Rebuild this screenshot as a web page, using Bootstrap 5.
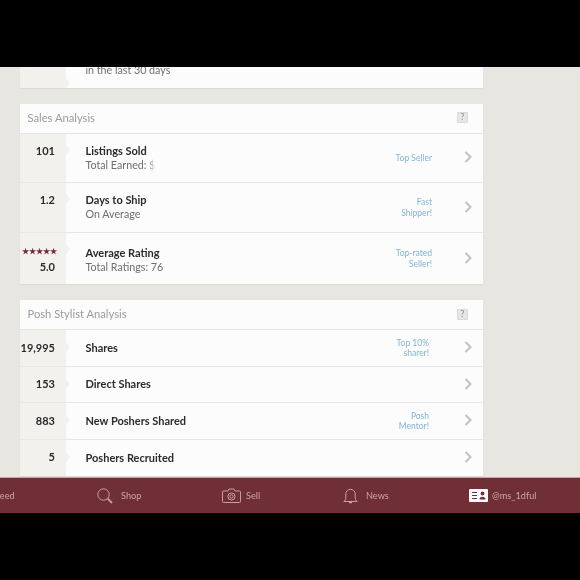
<!DOCTYPE html>
<html lang="en">
<head>
<meta charset="utf-8">
<title>Closet stats</title>
<link rel="stylesheet" href="https://cdn.jsdelivr.net/npm/bootstrap@5.3.0/dist/css/bootstrap.min.css">
<style>
html,body{height:580px;overflow:hidden;background:#000}
body{font-family:"Lato","Liberation Sans",sans-serif;color:#2b2a2c}
.letter-bar{height:67px;background:#000}
.stage{height:409.5px;overflow:hidden;background:#e8e6e1;padding:0 97px 0 19.5px;filter:blur(.35px)}
.panel{border:0;border-radius:0;background:#fdfcfd;box-shadow:0 1px 1px #dcdad5}
.panel+.panel{margin-top:16px}
.panel-head{height:30px;padding:0 15px 0 8px;font-size:11.2px;color:#9b9a9c;border-bottom:1.500px solid #e6e4e3}
.qmark{width:11px;height:11px;margin-top:-1px;background:#e8e6e3;border:1px solid #dcdad7;border-radius:1px;font-size:8.500px;line-height:9px;text-align:center;color:#8f8e8e}
.stat-row{border-bottom:1.500px solid #e9e7e6;position:relative}
.stat-row:last-child{border-bottom:0}
.rh48{height:49.5px}.rh52{height:51.5px}.rh36{height:36.5px}
.rh-first{height:20.5px}
.stat-cell{width:46.5px;flex:none;background:#f3f1ee;padding-right:11px;text-align:right;font-size:11px;font-weight:700;color:#2b2a2c;position:relative;align-self:stretch;white-space:nowrap}
.stat-cell::after{content:"";position:absolute;left:100%;top:11px;border-left:4px solid #f3f1ee;border-top:5px solid transparent;border-bottom:5px solid transparent}
.rh36 .stat-cell::after{top:12px}
.stat-num{line-height:13px}
.pt-a{padding-top:10px}.pt-b{padding-top:10.500px}.pt-c{padding-top:14.500px}
.stars{font-size:7.500px;letter-spacing:.1px;line-height:9px;color:#7a2a3d;margin:0 -2px 3.500px -3px;white-space:nowrap}
.row-body{padding-left:19.500px;min-width:0}
.row-title{font-size:11px;font-weight:700;line-height:14px}
.row-sub{font-size:10.700px;line-height:14px;color:#6e6d70}
.lift-first{margin-top:-4px}
.low-line{padding-top:4px}
.row-tag{font-size:8.500px;line-height:10.500px;padding-top:1px;color:#7fb5d0;text-align:right;width:70px}
.tag-a{margin-right:32px}.tag-b{margin-right:35px}
.chev{width:8px;height:12px;margin:-1px 11px 0 0;flex:none}
.smear{position:absolute;left:132px;top:18px;width:76px;height:20px;background:#fdfcfd;filter:blur(2px)}
.tabbar{height:36.5px;background:#6f2f35;border-top:1px solid #c9a5a3;padding-top:1px;margin-left:-27px;display:grid;grid-template-columns:124px 125px 121px 126px auto;font-size:9.200px;color:#c7a6a8;align-items:center;filter:blur(.3px)}
.tab-cell{display:flex;align-items:center;white-space:nowrap}
.tab-ic{flex:none;margin-right:8px}
.tab-me{margin-right:4px}
.tab-sell{margin-right:5px}
.cut{overflow:hidden;width:580px;background:#6f2f35}
</style>
</head>
<body>
<div class="letter-bar"></div>
<main class="stage">
  <div class="card panel">
    <div class="d-flex stat-row rh-first">
      <div class="stat-cell"></div>
      <div class="row-body row-sub flex-grow-1 lift-first">in the last 30 days</div>
    </div>
  </div>
  <section class="card panel">
    <div class="panel-head d-flex align-items-center justify-content-between"><span>Sales Analysis</span><span class="qmark">?</span></div>
    <div class="d-flex align-items-center stat-row rh48">
      <div class="stat-cell pt-a"><div class="stat-num">101</div></div>
      <div class="row-body flex-grow-1"><div class="row-title">Listings Sold</div><div class="row-sub">Total Earned: $</div></div>
      <div class="row-tag tag-a">Top Seller</div>
      <svg class="chev" viewBox="0 0 8 12"><path d="M1.5 1l5 5-5 5" fill="none" stroke="#c2c0c1" stroke-width="2"/></svg>
      <div class="smear"></div>
    </div>
    <div class="d-flex align-items-center stat-row rh48">
      <div class="stat-cell pt-a"><div class="stat-num">1.2</div></div>
      <div class="row-body flex-grow-1"><div class="row-title">Days to Ship</div><div class="row-sub">On Average</div></div>
      <div class="row-tag tag-a">Fast<br>Shipper!</div>
      <svg class="chev" viewBox="0 0 8 12"><path d="M1.5 1l5 5-5 5" fill="none" stroke="#c2c0c1" stroke-width="2"/></svg>
    </div>
    <div class="d-flex align-items-center stat-row rh52">
      <div class="stat-cell pt-c"><div class="stars">★★★★★</div><div class="stat-num">5.0</div></div>
      <div class="row-body flex-grow-1 low-line"><div class="row-title">Average Rating</div><div class="row-sub">Total Ratings: 76</div></div>
      <div class="row-tag tag-a">Top-rated<br>Seller!</div>
      <svg class="chev" viewBox="0 0 8 12"><path d="M1.5 1l5 5-5 5" fill="none" stroke="#c2c0c1" stroke-width="2"/></svg>
    </div>
  </section>
  <section class="card panel">
    <div class="panel-head d-flex align-items-center justify-content-between"><span>Posh Stylist Analysis</span><span class="qmark">?</span></div>
    <div class="d-flex align-items-center stat-row rh36">
      <div class="stat-cell pt-b"><div class="stat-num">19,995</div></div>
      <div class="row-body flex-grow-1"><div class="row-title">Shares</div></div>
      <div class="row-tag tag-b">Top 10%<br>sharer!</div>
      <svg class="chev" viewBox="0 0 8 12"><path d="M1.5 1l5 5-5 5" fill="none" stroke="#c2c0c1" stroke-width="2"/></svg>
    </div>
    <div class="d-flex align-items-center stat-row rh36">
      <div class="stat-cell pt-b"><div class="stat-num">153</div></div>
      <div class="row-body flex-grow-1"><div class="row-title">Direct Shares</div></div>
      <svg class="chev" viewBox="0 0 8 12"><path d="M1.5 1l5 5-5 5" fill="none" stroke="#c2c0c1" stroke-width="2"/></svg>
    </div>
    <div class="d-flex align-items-center stat-row rh36">
      <div class="stat-cell pt-b"><div class="stat-num">883</div></div>
      <div class="row-body flex-grow-1"><div class="row-title">New Poshers Shared</div></div>
      <div class="row-tag tag-b">Posh<br>Mentor!</div>
      <svg class="chev" viewBox="0 0 8 12"><path d="M1.5 1l5 5-5 5" fill="none" stroke="#c2c0c1" stroke-width="2"/></svg>
    </div>
    <div class="d-flex align-items-center stat-row rh36">
      <div class="stat-cell pt-b"><div class="stat-num">5</div></div>
      <div class="row-body flex-grow-1"><div class="row-title">Poshers Recruited</div></div>
      <svg class="chev" viewBox="0 0 8 12"><path d="M1.5 1l5 5-5 5" fill="none" stroke="#c2c0c1" stroke-width="2"/></svg>
    </div>
  </section>
</main>
<div class="cut">
<nav class="tabbar">
  <div class="tab-cell"><svg class="tab-ic" width="14" height="14" viewBox="0 0 14 14"><path d="M1 13V1h12v12z" fill="none" stroke="#c7a6a8"/></svg><span>Feed</span></div>
  <div class="tab-cell"><svg class="tab-ic" width="16" height="16" viewBox="0 0 16 16" fill="none" stroke="#c79fa2"><circle cx="6.5" cy="6.5" r="5.7"/><path d="M10.7 10.7l4.3 4.3" stroke-width="1.8"/></svg><span>Shop</span></div>
  <div class="tab-cell"><svg class="tab-ic tab-sell" width="19" height="15" viewBox="0 0 19 15" fill="none" stroke="#c79fa2"><path d="M1.5 3h4.5l1-2h5l1 2h4.5a1 1 0 0 1 1 1v9.500a1 1 0 0 1-1 1H1.500a1 1 0 0 1-1-1V4a1 1 0 0 1 1-1z"/><circle cx="9.500" cy="8.500" r="3.600"/><circle cx="9.500" cy="8.500" r="1.700"/></svg><span>Sell</span></div>
  <div class="tab-cell"><svg class="tab-ic" width="15" height="16" viewBox="0 0 15 16" fill="none" stroke="#c79fa2"><path d="M.8 13.500c1.500-1 2-2 2-4.500V6a4.700 4.700 0 0 1 9.400 0v3c0 2.500.5 3.500 2 4.500z"/><path d="M6 14.500h3" stroke-width="1.500"/></svg><span>News</span></div>
  <div class="tab-cell"><svg class="tab-ic tab-me" width="19" height="13" viewBox="0 0 19 13"><rect width="19" height="13" rx="1" fill="#fff"/><path d="M3 3.500h5M3 6.500h5M3 9.500h5" stroke="#6f2f35" stroke-width="1.100"/><circle cx="13.500" cy="4.500" r="1.900" fill="#6f2f35"/><path d="M10.500 10.500c0-2 1.200-2.800 3-2.800s3 .8 3 2.800z" fill="#6f2f35"/></svg><span>@ms_1dful</span></div>
</nav>
</div>
</body>
</html>
